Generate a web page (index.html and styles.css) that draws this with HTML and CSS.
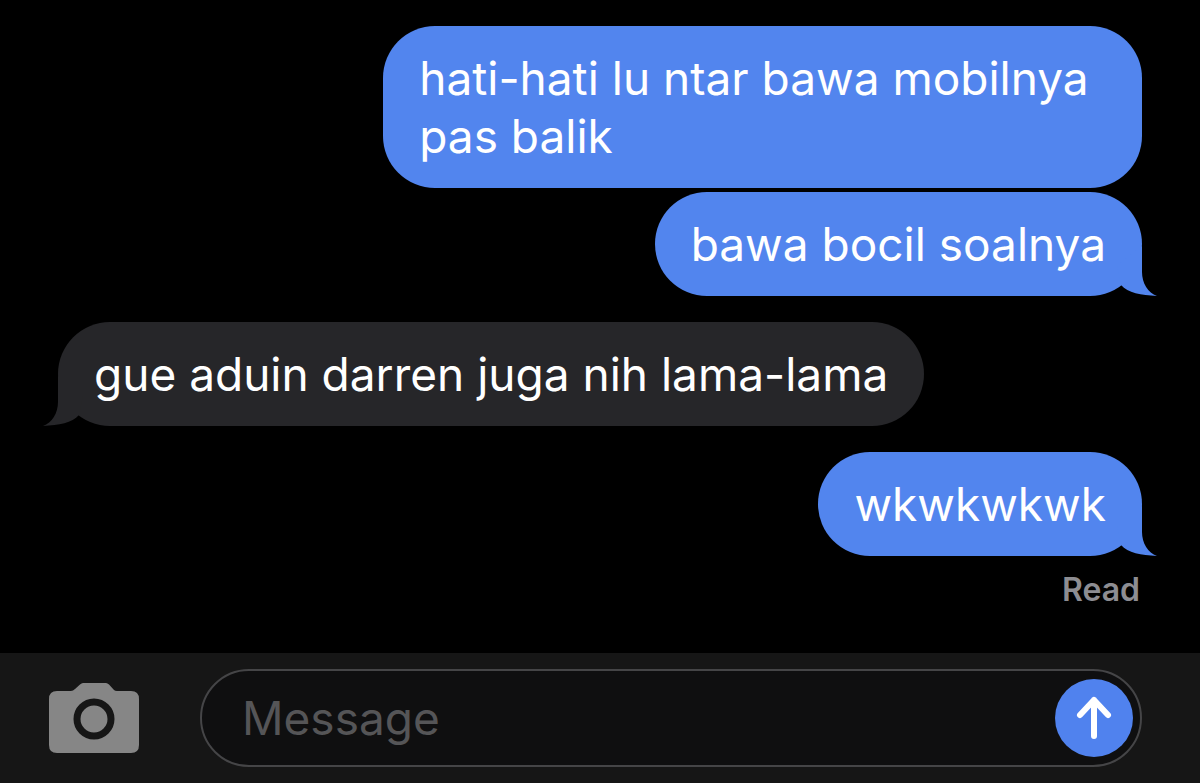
FILE: index.html
```html
<!DOCTYPE html>
<html lang="id">
<head>
  <meta charset="UTF-8" />
  <meta name="viewport" content="width=device-width, initial-scale=1.0" />
  <title>Messages</title>
  <link rel="stylesheet" href="styles.css">
</head>
<body>
  <main class="chat">
    <div class="group sent">
      <p class="bubble">hati-hati lu ntar bawa mobilnya pas balik</p>
      <p class="bubble">
        bawa bocil soalnya
        <svg class="tail" viewBox="0 0 40 50" aria-hidden="true"><path d="M25 0V26C25 37 31 47 40 50C24 49 11 47 4 39L0 20Z" /></svg>
      </p>
    </div>
    <div class="group received">
      <p class="bubble">
        gue aduin darren juga nih lama-lama
        <svg class="tail" viewBox="0 0 40 50" aria-hidden="true"><path d="M25 0V26C25 37 31 47 40 50C24 49 11 47 4 39L0 20Z" /></svg>
      </p>
    </div>
    <div class="group sent">
      <p class="bubble">
        wkwkwkwk
        <svg class="tail" viewBox="0 0 40 50" aria-hidden="true"><path d="M25 0V26C25 37 31 47 40 50C24 49 11 47 4 39L0 20Z" /></svg>
      </p>
      <span class="status">Read</span>
    </div>
  </main>

  <form class="composer">
    <button class="camera-btn" type="button" aria-label="Camera">
      <svg viewBox="0 0 90 70" aria-hidden="true">
        <path fill="#868686" d="M8 8H22Q24 8 26 6L31 1.5Q32.5 0 34 0H57Q58.5 0 60 1.5L65 7Q66 8 68 8H82Q90 8 90 16V62Q90 70 82 70H8Q0 70 0 62V16Q0 8 8 8Z" />
        <circle cx="45" cy="36" r="17" fill="none" stroke="#161616" stroke-width="7" />
      </svg>
    </button>
    <div class="field">
      <input class="message-input" type="text" placeholder="Message" aria-label="Message" />
      <button class="send-btn" type="submit" aria-label="Send">
        <svg viewBox="0 0 78 78" aria-hidden="true">
          <path d="M39 57V21M25 36L39 21L53 36" fill="none" stroke="#fff" stroke-width="6" stroke-linecap="round" stroke-linejoin="round" />
        </svg>
      </button>
    </div>
  </form>
</body>
</html>
```
FILE: styles.css
```css
* {
  box-sizing: border-box;
}

body {
  margin: 0;
  min-height: 100vh;
  display: flex;
  flex-direction: column;
  background: #000;
  color: #fff;
  font-family: Inter, "Liberation Sans", sans-serif;
}

.chat {
  flex: 1;
  display: flex;
  flex-direction: column;
  gap: 26px;
  padding: 26px 58px;
}

.group {
  display: flex;
  flex-direction: column;
  gap: 4px;
}

.sent {
  align-items: flex-end;
}

.received {
  align-items: flex-start;
}

.bubble {
  position: relative;
  max-width: 70%;
  margin: 0;
  padding: 23px 36px;
  border-radius: 52px;
  font-size: 46px;
  font-weight: 380;
  line-height: 58px;
}

.sent .bubble {
  background: #5285ee;
  color: #fff;
}

.received .bubble {
  max-width: 85%;
  background: #262629;
}

.tail {
  position: absolute;
  right: -15px;
  bottom: 0;
  width: 40px;
  height: 50px;
  fill: #5285ee;
}

.received .tail {
  right: auto;
  left: -15px;
  fill: #262629;
  transform: scaleX(-1);
}

.status {
  padding: 10px 2px 0 0;
  color: #8d8d92;
  font-size: 32px;
  font-weight: 600;
  line-height: 40px;
}

.composer {
  display: flex;
  align-items: center;
  gap: 61px;
  padding: 16px 58px 16px 49px;
  background: #161616;
}

.camera-btn,
.send-btn {
  flex: none;
  padding: 0;
  border: none;
  background: none;
  cursor: pointer;
}

.camera-btn {
  width: 90px;
  height: 70px;
}

.camera-btn svg,
.send-btn svg {
  display: block;
  width: 100%;
}

.field {
  flex: 1;
  display: flex;
  align-items: center;
  height: 98px;
  padding: 0 7px 0 40px;
  border: 2px solid #454547;
  border-radius: 49px;
  background: #0f0f10;
}

.message-input {
  flex: 1;
  min-width: 0;
  padding: 0;
  border: none;
  outline: none;
  background: none;
  color: #fff;
  font: inherit;
  font-size: 46px;
  font-weight: 380;
  line-height: 58px;
}

.message-input::placeholder {
  color: #555557;
}

.send-btn {
  width: 78px;
  height: 78px;
  border-radius: 50%;
  background: #5082ee;
}
```
